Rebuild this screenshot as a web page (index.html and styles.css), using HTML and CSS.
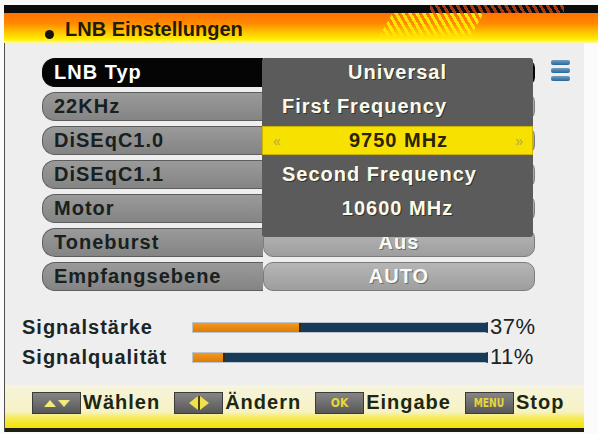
FILE: index.html
```html
<!DOCTYPE html>
<html>
<head>
<meta charset="utf-8">
<title>LNB Einstellungen</title>
<link rel="stylesheet" href="styles.css">
</head>
<body>
<div class="screen">
  <div class="topbar"><div class="topstripes"></div></div>
  <div class="header">
    <span class="dot"></span>
    <span class="title">LNB Einstellungen</span>
    <div class="hstripes"></div>
  </div>
  <div class="panel">
    <div class="menu-area">
      <div class="menu">
        <div class="row sel"><div class="label">LNB Typ</div><div class="value"></div></div>
        <div class="row"><div class="label">22KHz</div><div class="value"></div></div>
        <div class="row"><div class="label">DiSEqC1.0</div><div class="value"></div></div>
        <div class="row"><div class="label">DiSEqC1.1</div><div class="value"></div></div>
        <div class="row"><div class="label">Motor</div><div class="value"></div></div>
        <div class="row"><div class="label">Toneburst</div><div class="value">Aus</div></div>
        <div class="row"><div class="label">Empfangsebene</div><div class="value">AUTO</div></div>
        <div class="popup">
          <div class="p-item p-center">Universal</div>
          <div class="p-item p-left">First Frequency</div>
          <div class="p-item p-sel"><span class="arr">&#171;</span><span class="p-val">9750 MHz</span><span class="arr">&#187;</span></div>
          <div class="p-item p-left">Second Frequency</div>
          <div class="p-item p-center">10600 MHz</div>
        </div>
      </div>
      <div class="scroll-icon"><span></span><span></span><span></span></div>
    </div>
    <div class="signals">
      <div class="sig-row">
        <div class="sig-label">Signalstärke</div>
        <div class="bar"><div class="fill" style="width:37%"></div></div>
        <div class="pct">37%</div>
      </div>
      <div class="sig-row">
        <div class="sig-label">Signalqualität</div>
        <div class="bar"><div class="fill" style="width:11%"></div></div>
        <div class="pct">11%</div>
      </div>
    </div>
    <div class="footer">
      <div class="key">
        <svg width="28" height="12" viewBox="0 0 28 12"><polygon points="1,10 7,3 13,10" fill="#f2ea7a"/><polygon points="15,3 27,3 21,10" fill="#f2ea7a"/></svg>
      </div>
      <span class="ftext">Wählen</span>
      <div class="key">
        <svg width="22" height="14" viewBox="0 0 22 14"><polygon points="1,7 10,0 10,14" fill="#f2e04a"/><polygon points="12,0 21,7 12,14" fill="#f2e04a"/><rect x="10" y="0" width="2" height="14" fill="#4a4410"/></svg>
      </div>
      <span class="ftext">Ändern</span>
      <div class="key"><span class="ktext">OK</span></div>
      <span class="ftext">Eingabe</span>
      <div class="key"><span class="ktext menu-k">MENU</span></div>
      <span class="ftext">Stop</span>
    </div>
  </div>
</div>
</body>
</html>
```

FILE: styles.css
```css
* { box-sizing: border-box; }

body {
  margin: 0;
  background: #fbfbfb;
  font-family: "Liberation Sans", Arial, sans-serif;
  font-weight: bold;
  font-size: 20px;
  letter-spacing: 1px;
}

.screen {
  margin: 5px 0 0 4px;
  width: 594px;
  display: flex;
  flex-direction: column;
}

.topbar {
  height: 8px;
  background: #0c0c0c;
  display: flex;
}

.topstripes {
  margin-left: 426px;
  width: 134px;
  height: 8px;
  background: repeating-linear-gradient(60deg, #0c0c0c 0 2px, #a5380e 2px 5px, #0c0c0c 5px 6px);
}

.header {
  height: 30px;
  background: linear-gradient(#ff7200 0%, #ff8a00 35%, #ffc000 62%, #fff000 88%, #fff7a8 100%);
  display: flex;
  align-items: center;
  padding-left: 41px;
  padding-top: 3px;
}

.dot {
  width: 9px;
  height: 9px;
  border-radius: 50%;
  background: #141414;
  margin-top: 9px;
}

.title {
  margin-left: 11px;
  color: #231c04;
  letter-spacing: 0;
}

.hstripes {
  margin-left: 135px;
  align-self: flex-start;
  margin-top: -3px;
  width: 106px;
  height: 26px;
  background: repeating-linear-gradient(60deg, rgba(255,240,0,0) 0 3px, #ffe600 3px 6px);
  clip-path: polygon(14% 0, 100% 0, 86% 100%, 0 100%);
}

.panel {
  width: 580px;
  background: #eeeeee;
  border-left: 1px solid #4e4e4e;
  display: flex;
  flex-direction: column;
}

.menu-area {
  display: flex;
  padding: 15px 0 0 37px;
}

.menu {
  position: relative;
  width: 493px;
  display: flex;
  flex-direction: column;
  gap: 5px;
}

.row {
  display: flex;
  height: 29px;
}

.label {
  width: 221px;
  height: 29px;
  border-radius: 13px 0 0 13px;
  background: linear-gradient(#9a9a9a, #848484);
  border: 1px solid #5e5e5e;
  border-right: none;
  color: #182020;
  padding-left: 11px;
  display: flex;
  align-items: center;
}

.value {
  flex: 1;
  height: 29px;
  border-radius: 10px;
  background: linear-gradient(#b6b6b6, #9e9e9e);
  border: 1px solid #7c7c7c;
  color: #fafaf4;
  display: flex;
  align-items: center;
  justify-content: center;
  text-shadow: 1px 1px 0 #6a6a6a;
}

.row.sel .label,
.row.sel .value {
  background: #050505;
  border-color: #050505;
  color: #ffffff;
}

.popup {
  position: absolute;
  top: 0;
  left: 220px;
  width: 271px;
  height: 179px;
  background: #5b5b5b;
  border-radius: 3px;
  display: flex;
  flex-direction: column;
  gap: 5px;
  color: #fbfbea;
  text-shadow: 1px 1px 0 #333;
}

.p-item {
  height: 29px;
  display: flex;
  align-items: center;
}

.p-center { justify-content: center; }

.p-left { padding-left: 20px; }

.p-sel {
  background: #f6e100;
  border: 1px solid #cbb500;
  color: #2c2300;
  text-shadow: none;
  justify-content: space-between;
  padding: 0 8px 0 10px;
}

.arr {
  color: #b0a650;
  font-size: 14px;
  font-weight: normal;
}

.scroll-icon {
  margin: 2px 0 0 16px;
  display: flex;
  flex-direction: column;
  gap: 3px;
}

.scroll-icon span {
  width: 19px;
  height: 5px;
  border-radius: 2px;
  background: linear-gradient(#6aa0c8, #2f6590);
}

.signals {
  margin-top: 26px;
  display: flex;
  flex-direction: column;
  gap: 10px;
}

.sig-row {
  display: flex;
  align-items: center;
  height: 20px;
  padding-left: 17px;
}

.sig-label {
  width: 170px;
  color: #1a2626;
}

.bar {
  width: 296px;
  height: 11px;
  background: #173a58;
  border: 1px solid #b9c4cc;
  border-right: 3px solid #173a58;
  display: flex;
}

.fill {
  background: linear-gradient(#f09a1c, #e07a08);
  border-right: 2px solid #3a2a10;
}

.pct {
  margin-left: 2px;
  font-weight: normal;
  font-size: 22px;
  letter-spacing: 0.5px;
  color: #1a2424;
}

.footer {
  margin-top: 18px;
  height: 47px;
  background: linear-gradient(#f6f4dc 0%, #f7f2c4 62%, #f6ea50 78%, #f3e200 100%);
  border-bottom: 4px solid #1e1e14;
  display: flex;
  align-items: center;
  padding: 0 0 8px 27px;
}

.key {
  width: 49px;
  height: 22px;
  background: linear-gradient(#858585, #585858);
  border: 1px solid #3a3a3a;
  display: flex;
  align-items: center;
  justify-content: center;
}

.ktext {
  color: #e6d63a;
  font-size: 12px;
  letter-spacing: 0;
  font-family: "DejaVu Sans Condensed", "DejaVu Sans", sans-serif;
}

.menu-k { font-size: 12px; transform: scaleX(0.85); }

.ftext {
  color: #1c2814;
  margin: 0 14px 0 2px;
}
```
